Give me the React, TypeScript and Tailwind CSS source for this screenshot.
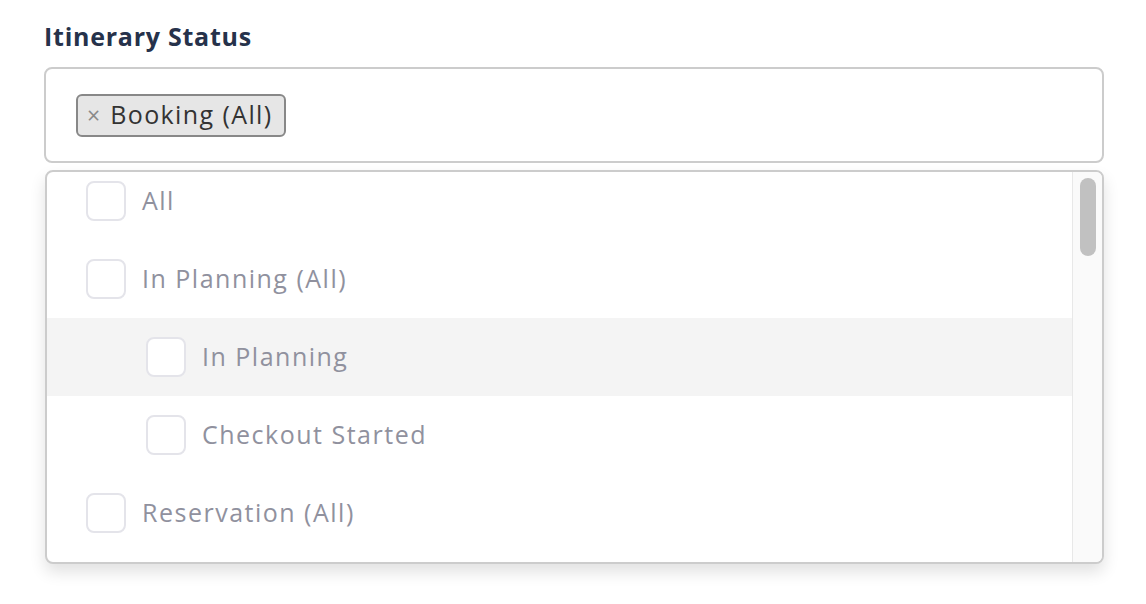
const options = [
  { label: 'All', level: 0 },
  { label: 'In Planning (All)', level: 0 },
  { label: 'In Planning', level: 1, hover: true },
  { label: 'Checkout Started', level: 1 },
  { label: 'Reservation (All)', level: 0 },
]

export default function App() {
  return (
    <div className="w-[1146px] h-[604px] bg-white pl-[44px] pr-[42px] pt-[20px] font-['Open_Sans',sans-serif]">
      <h2 className="text-[25px] leading-[32px] font-bold tracking-[0.75px] text-[#26324b] mb-[15px]">Itinerary Status</h2>

      {/* Select control */}
      <div className="h-[96px] border-2 border-[#cccccc] rounded-[8px] flex items-center pl-[30px]">
        <div className="flex items-center h-[43px] bg-[#e6e6e6] border-2 border-[#888888] rounded-[6px] pl-[9px] pr-[11px] gap-[10px]">
          <span className="text-[23px] leading-none text-[#8a8a8a]">×</span>
          <span className="text-[25px] leading-none tracking-[1.4px] text-[#333333] pb-[2px]">Booking (All)</span>
        </div>
      </div>

      {/* Menu */}
      <div className="relative mt-[7px] ml-px h-[394px] border-2 border-[#cccccc] rounded-[8px] bg-white overflow-hidden shadow-[0_8px_16px_rgba(0,0,0,0.12)] flex">
        <div className="flex-1 -mt-[10px]">
          {options.map((o) => (
            <div
              key={o.label}
              className={`h-[78px] flex items-center gap-[16px] ${o.level ? 'pl-[99px]' : 'pl-[39px]'} ${o.hover ? 'bg-[#f4f4f4]' : ''}`}
            >
              <span className="w-[40px] h-[40px] rounded-[8px] border-2 border-[#e4e4ea] bg-white" />
              <span className="text-[25px] tracking-[1.5px] text-[#90919e] pb-[1px]">{o.label}</span>
            </div>
          ))}
        </div>
        <div className="w-[30px] bg-[#fafafa] border-l border-[#e8e8e8] pt-[6px] flex justify-center">
          <div className="w-[16px] h-[78px] rounded-full bg-[#c1c1c1]" />
        </div>
      </div>
    </div>
  )
}
